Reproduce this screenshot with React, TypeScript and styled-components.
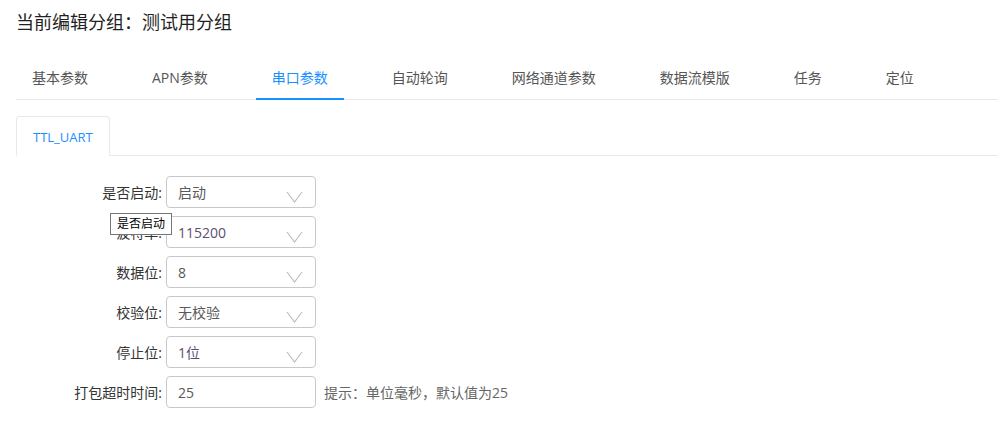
import styled, { createGlobalStyle } from "styled-components";

const GlobalStyle = createGlobalStyle`
  html, body {
    margin: 0;
    padding: 0;
    background: #ffffff;
  }
  body {
    font-family: "Open Sans", "Noto Sans CJK SC", sans-serif;
    color: #333;
  }
`;

const Page = styled.div`
  padding: 10px 0 0 16px;
`;

const Title = styled.h1`
  margin: 0;
  font-size: 18px;
  font-weight: 400;
  line-height: 24px;
  color: #1f1f1f;
`;

const Nav = styled.div`
  display: flex;
  margin-top: 24px;
  border-bottom: 1px solid #e8e8e8;
`;

const NavItem = styled.div<{ $active?: boolean }>`
  padding: 0 16px;
  margin-right: 32px;
  height: 42px;
  line-height: 40px;
  font-size: 14px;
  color: ${(p) => (p.$active ? "#1890ff" : "#555")};
  border-bottom: 2px solid ${(p) => (p.$active ? "#1890ff" : "transparent")};
  margin-bottom: -1px;
  box-sizing: border-box;
`;

const CardBar = styled.div`
  display: flex;
  margin-top: 16px;
  border-bottom: 1px solid #e8e8e8;
`;

const CardTab = styled.div`
  padding: 0 16px;
  height: 40px;
  line-height: 40px;
  font-size: 13px;
  color: #1890ff;
  border: 1px solid #e8e8e8;
  border-bottom: 1px solid #fff;
  border-radius: 4px 4px 0 0;
  margin-bottom: -1px;
  box-sizing: border-box;
  background: #fff;
`;

const Form = styled.div`
  display: flex;
  flex-direction: column;
  gap: 8px;
  margin-top: 20px;
`;

const Row = styled.div`
  position: relative;
  display: flex;
  align-items: center;
  height: 32px;
`;

const Label = styled.div`
  width: 146px;
  padding-right: 4px;
  text-align: right;
  font-size: 14px;
  color: #333;
`;

const SelectBox = styled.div<{ $tone?: string }>`
  position: relative;
  width: 150px;
  height: 32px;
  box-sizing: border-box;
  border: 1px solid #c8c8c8;
  border-radius: 4px;
  padding: 0 11px;
  display: flex;
  align-items: center;
  font-size: 14px;
  color: ${(p) => p.$tone ?? "#595959"};
`;

const Chevron = styled.svg`
  position: absolute;
  right: 12px;
  top: 14px;
`;

const Hint = styled.span`
  margin-left: 8px;
  font-size: 14px;
  color: #666;
`;

const Tooltip = styled.div`
  position: absolute;
  left: 94px;
  top: -3px;
  height: 22px;
  box-sizing: border-box;
  padding: 0 6px;
  line-height: 20px;
  font-size: 12px;
  color: #000;
  background: #fff;
  border: 1px solid #767676;
  white-space: nowrap;
`;

const tabs = ["基本参数", "APN参数", "串口参数", "自动轮询", "网络通道参数", "数据流模版", "任务", "定位"];

const fields: { label: string; value: string; tone?: string }[] = [
  { label: "是否启动:", value: "启动" },
  { label: "波特率:", value: "115200", tone: "#5d4f73" },
  { label: "数据位:", value: "8" },
  { label: "校验位:", value: "无校验" },
  { label: "停止位:", value: "1位", tone: "#5d4f73" },
];

const Arrow = () => (
  <Chevron width="17" height="12" viewBox="0 0 17 12">
    <path d="M1 1 L8.5 11 L16 1" fill="none" stroke="#bdbdbd" strokeWidth="1.2" />
  </Chevron>
);

export default function App() {
  return (
    <Page>
      <GlobalStyle />
      <Title>当前编辑分组：测试用分组</Title>
      <Nav>
        {tabs.map((t) => (
          <NavItem key={t} $active={t === "串口参数"}>
            {t}
          </NavItem>
        ))}
      </Nav>
      <CardBar>
        <CardTab>TTL_UART</CardTab>
      </CardBar>
      <Form>
        {fields.map((f, i) => (
          <Row key={f.label}>
            <Label>{f.label}</Label>
            <SelectBox $tone={f.tone}>
              {f.value}
              <Arrow />
            </SelectBox>
            {i === 1 && <Tooltip>是否启动</Tooltip>}
          </Row>
        ))}
        <Row>
          <Label>打包超时时间:</Label>
          <SelectBox>25</SelectBox>
          <Hint>提示：单位毫秒，默认值为25</Hint>
        </Row>
      </Form>
    </Page>
  );
}
